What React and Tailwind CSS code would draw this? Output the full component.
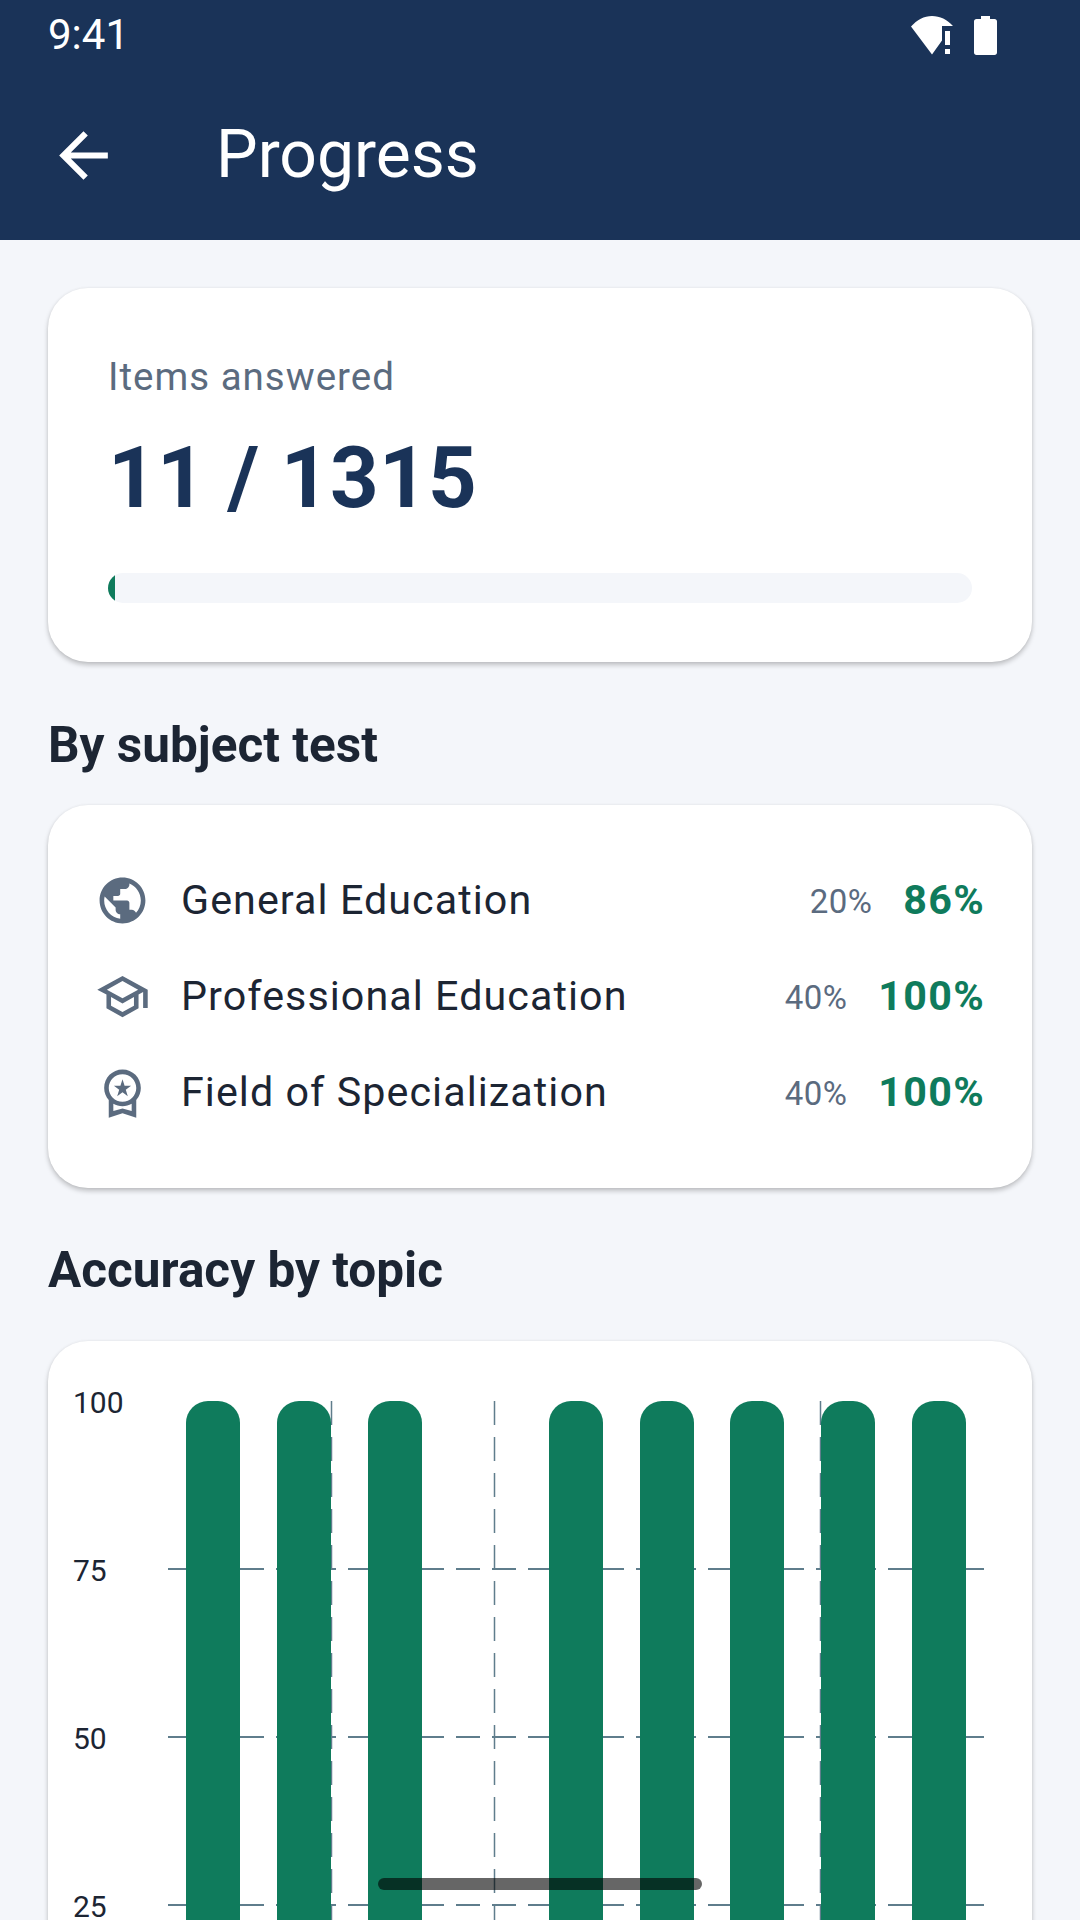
import React from "react";
import { MdArrowBack, MdPublic, MdOutlineSchool, MdOutlineWorkspacePremium } from "react-icons/md";

const rows = [
  { Icon: MdPublic, name: "General Education", w: "20%", v: "86%" },
  { Icon: MdOutlineSchool, name: "Professional Education", w: "40%", v: "100%" },
  { Icon: MdOutlineWorkspacePremium, name: "Field of Specialization", w: "40%", v: "100%" },
];
const bars = [186, 277, 368, 549, 640, 730, 821, 912];
const card = "bg-white rounded-[40px] shadow-[0_3px_5px_rgba(0,0,0,0.22),0_0_3px_rgba(0,0,0,0.06)]";

export default function App() {
  return (
    <div className="relative h-[1920px] w-[1080px] overflow-hidden bg-[#f4f6fa] font-['Roboto',sans-serif]">
      <header className="h-[240px] bg-[#1a3358] text-white">
        <div className="flex h-[70px] items-center justify-between pl-[48px] pr-[83px]">
          <span className="text-[42px] leading-none">9:41</span>
          <div className="flex items-center gap-[20px]">
            <svg width="43" height="39" viewBox="0 0 43 39" fill="white">
              <path d="M0 10.5C6 4 13 0 21 0C29 0 36 3.500 42 10L31 10L31 24.5L21 38.5Z" />
              <rect x="34" y="15" width="5" height="14" />
              <rect x="34" y="33" width="5" height="5" />
            </svg>
            <svg width="23" height="39" viewBox="0 0 23 39" fill="white">
              <path d="M7 0H16V3H20.5C22 3 23 4 23 5.500V36.500C23 38 22 39 20.500 39H2.500C1 39 0 38 0 36.500V5.500C0 4 1 3 2.500 3H7Z" />
            </svg>
          </div>
        </div>
        <div className="flex h-[170px] items-center pl-[47px]">
          <MdArrowBack className="h-[73px] w-[73px] text-white" />
          <h1 className="ml-[96px] text-[66px] leading-none font-normal">Progress</h1>
        </div>
      </header>

      <main className="px-[48px] pt-[48px]">
        <section className={`${card} h-[374px] pl-[60px] pr-[60px] pt-[66px]`}>
          <p className="text-[38.5px] leading-[46px] tracking-[1px] text-[#5b6b7f]">Items answered</p>
          <p className="mt-[28px] text-[85px] leading-[100px] font-bold tracking-[0.3px] text-[#1a3358]">11 / 1315</p>
          <div className="mt-[45px] h-[30px] overflow-hidden rounded-[15px] bg-[#f4f6fa]">
            <div className="h-full w-[7px] bg-[#0f7b5c]" />
          </div>
        </section>

        <h2 className="mt-[53px] mb-[30px] h-[60px] text-[49.5px] leading-[60px] font-bold text-[#1c2533]">By subject test</h2>

        <section className={`${card} flex h-[383px] flex-col pt-[48px] pl-[47px] pr-[47px]`}>
          {rows.map(({ Icon, name, w, v }) => (
            <div key={name} className="flex h-[96px] items-center">
              <Icon className="mb-[2px] h-[55px] w-[55px] text-[#5b6b7f]" />
              <span className="ml-[31px] flex-1 text-[41.25px] leading-none tracking-[1.05px] text-[#1c2533]">{name}</span>
              <span className="text-[33px] leading-none tracking-[0.4px] text-[#5b6b7f]">{w}</span>
              <span className="ml-[31px] text-[41.25px] leading-none font-bold tracking-[1.3px] text-[#0f7b5c]">{v}</span>
            </div>
          ))}
        </section>

        <h2 className="mt-[52px] mb-[41px] h-[60px] text-[49.5px] leading-[60px] font-bold text-[#1c2533]">Accuracy by topic</h2>

        <section className={`${card} flex h-[700px] pt-[60px]`}>
          <div className="flex w-[120px] flex-col gap-[168px] pl-[25px] pt-[2px] text-[30px] leading-none text-[#1c2533]">
            {["100", "75", "50", "25"].map((t) => (
              <div key={t} className="flex h-0 items-center">{t}</div>
            ))}
          </div>
          <svg width="816" height="640" viewBox="0 0 816 640" className="block">
            {[163, 326, 652].map((x) => (
              <line key={x} x1={x + 0.5} x2={x + 0.5} y1="0" y2="640" stroke="#5f7d8c" strokeWidth="1.5" strokeDasharray="24 12" />
            ))}
            {[168, 336, 504].map((y) => (
              <line key={y} x1="0" x2="816" y1={y} y2={y} stroke="#5f7d8c" strokeWidth="2" strokeDasharray="24 12" />
            ))}
            {bars.map((x) => (
              <path key={x} d={`M${x - 168} 640V22A22 22 0 0 1 ${x - 146} 0H${x - 136}A22 22 0 0 1 ${x - 114} 22V640Z`} fill="#0f7b5c" />
            ))}
          </svg>
        </section>
      </main>

      <div className="absolute left-[378px] top-[1878px] h-[12px] w-[324px] rounded-full bg-black/60" />
    </div>
  );
}
